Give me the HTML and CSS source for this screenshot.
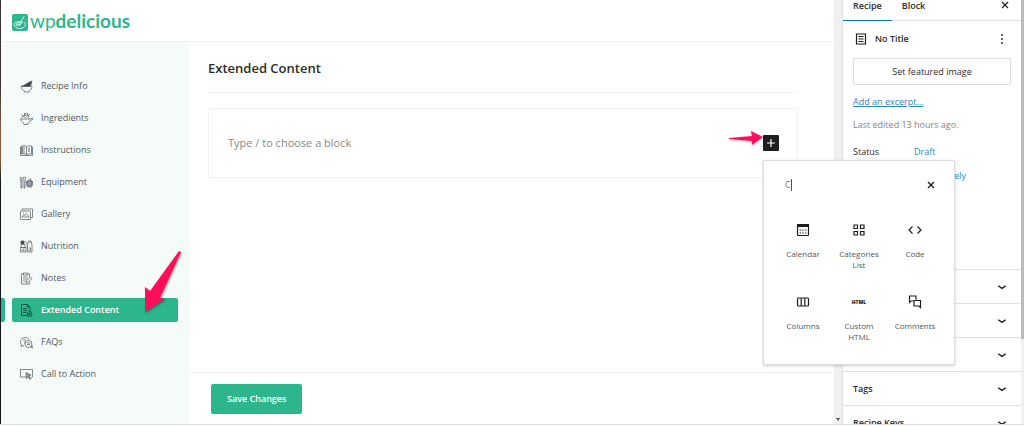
FILE: index.html
```html
<!DOCTYPE html>
<html lang="en">
<head>
<meta charset="UTF-8">
<meta name="viewport" content="width=device-width, initial-scale=1.0">
<title>WP Delicious - Extended Content</title>
<link rel="stylesheet" href="styles.css">
</head>
<body>
<div class="page">
    <div class="edge"></div>
    <div class="app">
        <header class="app-header">
            <a class="logo" href="#">
                <svg width="16" height="17" viewBox="0 0 32 34">
                    <rect width="32" height="34" rx="4" fill="#2db68d"/>
                    <g fill="none" stroke="#fff" stroke-width="1.6" stroke-linecap="round">
                        <path d="M12 16c-6 0-8 3-8 5 1 5 5 8 11 8 7 0 12-4 12-9 0-2-1-3-3-3"/>
                        <path d="M24 5L18 15M18 15c-5 0-9 3-10 7 6 2 12-1 12-6zM18 15c-3 2-5 4-6 7M19 16c0 3-2 5-4 6"/>
                    </g>
                </svg>
                <span class="logo-text">wp<b>delicious</b></span>
            </a>
        </header>
        <div class="app-body">
            <nav class="side-nav">
                <a href="#" class="nav-item">
                    <svg viewBox="0 0 26 26"><path d="M2 12h22c0 6-3 9-6 10v2H9v-2c-4-1-6-5-7-10z"/><path class="fill" d="M4 13L19 4l5-2-1 4-3 7z"/></svg>
                    <span>Recipe Info</span>
                </a>
                <a href="#" class="nav-item">
                    <svg viewBox="0 0 26 26"><path d="M1 14h20l4-2v3l-5 2c-1 4-3 6-5 6v2H8v-2c-4-2-6-5-7-9z"/><path d="M4 13c-2-4 2-6 4-4 0-3 4-3 5 0 2-3 6-1 5 4M9 8V2l3 3 3-3v6M3 5l4 3M20 4l-4 4M10 12v-2M14 12v-1"/></svg>
                    <span>Ingredients</span>
                </a>
                <a href="#" class="nav-item">
                    <svg viewBox="0 0 26 26"><path d="M13 6c-3-3-7-3-10-2v16c4-1 7-1 10 2 3-3 6-3 10-2V4c-3-1-7-1-10 2zM13 6v16M3 6H1v17h24V6h-2M16 9l4-1M16 12l4-1M16 15l4-1M5 5v14M8 5v14"/></svg>
                    <span>Instructions</span>
                </a>
                <a href="#" class="nav-item">
                    <svg viewBox="0 0 26 26"><path d="M1 2v6c0 2 3 2 3 0V2M2 9v15h2V9M7 3c3-2 5 0 4 4l-1 3v14H8V10zM14 10h10v9c0 3-10 3-10 0zM12 13h2M24 13h2M17 6h4v4M16 22v2M22 22v2"/><path class="soft" d="M14 10h10v10H14z"/></svg>
                    <span>Equipment</span>
                </a>
                <a href="#" class="nav-item">
                    <svg viewBox="0 0 26 26"><rect x="1" y="6" width="20" height="17" rx="1"/><path d="M4 5V2h21v17h-3M4 18c2-4 4-6 6-3 2-6 4-4 8 3zM6 10h2"/></svg>
                    <span>Gallery</span>
                </a>
                <a href="#" class="nav-item">
                    <svg viewBox="0 0 26 26"><path d="M2 9h8v6H2zM1 15h11v9H1zM10 2l5 8v14h9V10l-2-8h-5l-2 8M12 15l3-3M17 16h4v5h-4M5 18h4M3 21h6M18 5h3"/><path class="fill" d="M2 2h6v6H2z"/></svg>
                    <span>Nutrition</span>
                </a>
                <a href="#" class="nav-item">
                    <svg viewBox="0 0 26 26"><path d="M7 4H3v20h16v-4M15 4h4v6M7 2h8v4H7zM6 10h10M6 14h8M6 18h5M12 21l1-4 8-7 3 3-8 7z"/></svg>
                    <span>Notes</span>
                </a>
                <a href="#" class="nav-item active">
                    <svg viewBox="0 0 26 26"><path d="M14 23H3V1h12l5 5v8M15 1v5h5M6 9h8M6 13h8M6 17h6"/><circle cx="19" cy="20" r="5"/><path d="M19 17v6M16 20h6"/></svg>
                    <span>Extended Content</span>
                </a>
                <a href="#" class="nav-item">
                    <svg viewBox="0 0 26 26"><path d="M3 18c-4-5-2-14 6-15 5-1 8 2 9 5M3 18l-1 3 6-2"/><path d="M7 9c0-3 4-3 4 0l-2 3v1M9 15v1"/><circle cx="17" cy="16" r="7"/><path d="M21 22l4 2-1-5M14 14h7M14 17h6"/></svg>
                    <span>FAQs</span>
                </a>
                <a href="#" class="nav-item">
                    <svg viewBox="0 0 26 26"><path d="M12 18H1V3h24v15h-2"/><path class="soft" d="M12 9l10 5-4 2 4 5-2 2-4-5-3 3z"/></svg>
                    <span>Call to Action</span>
                </a>
            </nav>
            <main class="main">
                <div class="content">
                    <h2>Extended Content</h2>
                    <div class="block-box">
                        <span class="placeholder">Type / to choose a block</span>
                        <div class="inserter">
                            <button class="add-btn" aria-label="Add block">
                                <svg width="16" height="16" viewBox="0 0 16 16"><path d="M8 4v8M4 8h8" stroke="#fff" stroke-width="1.2"/></svg>
                            </button>
                            <svg class="arrow-small" viewBox="0 0 34 14"><path fill="#ff0f5b" d="M0 8v-1l23-2-1-5 12 6-11 8v-4z"/></svg>
                            <div class="popover">
                                <div class="search">
                                    <div class="search-field">
                                        <input type="text" value="C" aria-label="Search">
                                    </div>
                                    <button aria-label="Reset search">
                                        <svg width="8" height="8" viewBox="0 0 8 8"><path d="M1 1l6 6M7 1L1 7" stroke="#1e1e1e" stroke-width="1.4"/></svg>
                                    </button>
                                </div>
                                <div class="block-grid">
                                    <button class="block-type">
                                        <svg viewBox="0 0 16 16"><rect x="2.500" y="2.500" width="11" height="11" rx="1"/><path class="solid" d="M2 2h12v3H2z"/><path d="M4.600 8h7M4.600 11h7" stroke-dasharray="1.400 1.300"/></svg>
                                        <span>Calendar</span>
                                    </button>
                                    <button class="block-type">
                                        <svg viewBox="0 0 16 16"><path d="M3 3h3.500v3.500H3zM9.500 3H13v3.500H9.500zM3 9.500h3.500V13H3zM9.500 9.500H13V13H9.500z"/></svg>
                                        <span>Categories List</span>
                                    </button>
                                    <button class="block-type">
                                        <svg viewBox="0 0 16 16"><path d="M5.500 4.500L2 8l3.500 3.500M10.500 4.500L14 8l-3.500 3.500"/></svg>
                                        <span>Code</span>
                                    </button>
                                    <button class="block-type">
                                        <svg viewBox="0 0 16 16"><rect x="2.500" y="4" width="11" height="8" rx="1"/><path d="M6.200 4v8M9.800 4v8"/></svg>
                                        <span>Columns</span>
                                    </button>
                                    <button class="block-type">
                                        <i class="html-icon">HTML</i>
                                        <span>Custom HTML</span>
                                    </button>
                                    <button class="block-type">
                                        <svg viewBox="0 0 16 16"><path d="M6 7H4L2.500 8.500V2H9v3.500M7 6.500h6.500v7L12 12H7z"/></svg>
                                        <span>Comments</span>
                                    </button>
                                </div>
                            </div>
                        </div>
                    </div>
                </div>
                <footer class="save-bar">
                    <button class="save-btn">Save Changes</button>
                </footer>
            </main>
        </div>
        <svg class="arrow-big" viewBox="0 0 40 64"><path fill="#ff0f5b" d="M36 1l2 1-21 46 5 1L2 62V37l5 4z"/></svg>
    </div>
    <div class="scrollbar"><span></span></div>
    <aside class="settings">
        <div class="tabs">
            <button class="tab current">Recipe</button>
            <button class="tab">Block</button>
            <button class="close" aria-label="Close settings">
                <svg width="8" height="8" viewBox="0 0 8 8"><path d="M1 1l6 6M7 1L1 7" stroke="#1e1e1e" stroke-width="1.2"/></svg>
            </button>
        </div>
        <div class="summary">
            <div class="post-card">
                <svg width="12" height="12" viewBox="0 0 12 12"><path d="M1.500 1h9v10h-9zM3.500 3.500h5M3.500 6h5M3.500 8.500h5" fill="none" stroke="#1e1e1e" stroke-width="1.200"/></svg>
                <span>No Title</span>
                <button aria-label="Actions">
                    <svg width="4" height="12" viewBox="0 0 4 12" fill="#1e1e1e"><circle cx="2" cy="2" r="0.900"/><circle cx="2" cy="6" r="0.900"/><circle cx="2" cy="10" r="0.900"/></svg>
                </button>
            </div>
            <button class="featured">Set featured image</button>
            <a class="excerpt" href="#">Add an excerpt…</a>
            <p class="edited">Last edited 13 hours ago.</p>
            <div class="row"><span>Status</span><a href="#">Draft</a></div>
            <div class="row"><span>Publish</span><a href="#">Immediately</a></div>
        </div>
        <button class="panel" aria-label="Toggle panel"><svg viewBox="0 0 8 8"><path d="M1 3l3 2 3-2"/></svg></button>
        <button class="panel" aria-label="Toggle panel"><svg viewBox="0 0 8 8"><path d="M1 3l3 2 3-2"/></svg></button>
        <button class="panel" aria-label="Toggle panel"><svg viewBox="0 0 8 8"><path d="M1 3l3 2 3-2"/></svg></button>
        <button class="panel"><span>Tags</span><svg viewBox="0 0 8 8"><path d="M1 3l3 2 3-2"/></svg></button>
        <button class="panel"><span>Recipe Keys</span><svg viewBox="0 0 8 8"><path d="M1 3l3 2 3-2"/></svg></button>
    </aside>
    <div class="page-scroll"></div>
</div>
</body>
</html>
```
FILE: styles.css
```css
* {
    box-sizing: border-box;
}
body {
    margin: 0;
    background-color: #fff;
    font-family: "Open Sans", "Noto Sans", sans-serif;
    font-size: 9px;
    line-height: 12px;
    color: #2c2c2c;
    overflow: hidden;
}
button, input {
    font: inherit;
    color: inherit;
    background: none;
    border: none;
    padding: 0;
    margin: 0;
}
button {
    cursor: pointer;
}
a {
    text-decoration: none;
}
.page {
    display: flex;
    height: calc(100vh - 2px);
    border-bottom: 1px solid #ddd;
    overflow: hidden;
}
/* sliver of the dark admin menu */
.edge {
    width: 1px;
    background: linear-gradient(#3a3433 0%, #3a3433 20%, #8a5a3c 30%, #8a5a3c 38%, #14161c 43%);
}
.app {
    flex: 1;
    position: relative;
    display: flex;
    flex-direction: column;
}
.app-header {
    height: 42px;
    border-bottom: 1px solid #f0f0f0;
    padding: 0 11px;
    display: flex;
    align-items: center;
}
.logo {
    display: flex;
    align-items: center;
    gap: 2px;
    padding-top: 4px;
    color: #2db68d;
}
.logo-text {
    padding-bottom: 4px;
    font-family: Lato, sans-serif;
    font-size: 19px;
    line-height: 20px;
}
.app-body {
    flex: 1;
    display: flex;
}
.side-nav {
    width: 188px;
    background-color: #f5fbf9;
    padding: 32px 11px;
    display: flex;
    flex-direction: column;
    gap: 8px;
}
.nav-item {
    position: relative;
    height: 24px;
    padding: 0 8px;
    display: flex;
    align-items: center;
    gap: 8px;
    border-radius: 2px;
    color: #50575e;
}
.nav-item svg {
    width: 13px;
    height: 13px;
    fill: none;
    stroke: #50575e;
    stroke-width: 1.4;
}
.nav-item .fill {
    fill: #3c4348;
}
.nav-item .soft {
    fill: #9aa3a5;
}
.nav-item.active {
    background-color: #2db68d;
    color: #fff;
    font-weight: 600;
}
.nav-item.active svg {
    stroke: #17493b;
    stroke-width: 1.8;
}
/* end of the highlighted admin menu entry */
.nav-item.active::before {
    content: "";
    position: absolute;
    left: -11px;
    width: 4px;
    height: 24px;
    background-color: #2db68d;
    border-radius: 0 2px 2px 0;
}
.main {
    flex: 1;
    display: flex;
    flex-direction: column;
}
.content {
    flex: 1;
    padding: 16px 36px 16px 19px;
}
.content h2 {
    margin: 0 0 15px;
    padding-bottom: 14px;
    border-bottom: 1px solid #f0f0f0;
    font-size: 13px;
    line-height: 20px;
    font-weight: 600;
}
.block-box {
    height: 70px;
    padding: 0 18px 0 19px;
    border: 1px solid #f3f3f3;
    display: flex;
    align-items: center;
    justify-content: space-between;
}
.placeholder {
    font-size: 11px;
    line-height: 16px;
    color: #888;
}
.inserter {
    position: relative;
}
.add-btn {
    display: block;
    width: 16px;
    height: 16px;
    background-color: #1e1e1e;
    border-radius: 1px;
}
.add-btn svg {
    display: block;
}
.arrow-small {
    position: absolute;
    right: 16px;
    top: -4px;
    width: 34px;
    height: 14px;
    filter: drop-shadow(0 1px 1px rgba(0, 0, 0, 0.3));
}
.popover {
    position: absolute;
    top: 25px;
    left: 0;
    z-index: 2;
    width: 192px;
    height: 205px;
    padding: 16px 11px 8px;
    background-color: #fff;
    border: 1px solid #ddd;
    border-radius: 1px;
    box-shadow: 0 1px 3px rgba(0, 0, 0, 0.2);
}
.search {
    display: flex;
    align-items: center;
    justify-content: space-between;
    height: 16px;
    padding: 0 8px 0 10px;
    margin-bottom: 27px;
}
.search-field {
    position: relative;
}
.search-field input {
    width: 100px;
    display: block;
    color: #757575;
}
/* text caret */
.search-field::after {
    content: "";
    position: absolute;
    left: 6px;
    top: 0;
    width: 1px;
    height: 12px;
    background-color: #555;
}
.search button svg {
    display: block;
}
.block-grid {
    display: grid;
    grid-template-columns: repeat(3, 1fr);
    grid-auto-rows: 72px;
}
.block-type {
    display: flex;
    flex-direction: column;
    align-items: center;
    gap: 10px;
    padding: 2px 4px;
    font-size: 8px;
    line-height: 11px;
    color: #50575e;
}
.block-type svg {
    width: 16px;
    height: 16px;
    fill: none;
    stroke: #1e1e1e;
    stroke-width: 1.2;
}
.block-type .solid {
    fill: #1e1e1e;
    stroke: none;
}
.html-icon {
    height: 16px;
    font-size: 5px;
    line-height: 16px;
    font-style: normal;
    font-weight: 800;
    color: #1e1e1e;
}
.save-bar {
    height: 52px;
    padding: 0 22px;
    border-top: 1px solid #f0f0f0;
    display: flex;
    align-items: center;
}
.save-btn {
    height: 30px;
    padding: 0 16px;
    background-color: #2db68d;
    border-radius: 2px;
    color: #fff;
    font-weight: 600;
}
.arrow-big {
    position: absolute;
    left: 142px;
    top: 250px;
    width: 40px;
    height: 64px;
    filter: drop-shadow(1px 1px 1px rgba(0, 0, 0, 0.4));
}
.scrollbar {
    width: 9px;
    background-color: #f0f0f0;
    border-right: 1px solid #e0e0e0;
    display: flex;
    align-items: flex-end;
    justify-content: center;
    padding-bottom: 3px;
}
.scrollbar span {
    border: 2px solid transparent;
    border-top: 3px solid #555;
    border-bottom: none;
}
.settings {
    width: 178px;
    overflow: hidden;
}
.tabs {
    height: 21px;
    display: flex;
    border-bottom: 1px solid #e0e0e0;
}
.tab {
    height: 21px;
    padding: 0 10px 9px;
    font-weight: 600;
}
.tab.current {
    border-bottom: 1px solid #007cba;
}
.close {
    margin-left: auto;
    padding: 0 12px 10px;
}
.close svg {
    display: block;
}
.summary {
    height: 248px;
    padding: 10px 10px 0;
}
.post-card {
    display: flex;
    align-items: center;
    gap: 8px;
    height: 16px;
    padding: 0 7px 0 2px;
    margin-bottom: 11px;
    font-weight: 600;
}
.post-card button {
    margin-left: auto;
    height: 12px;
}
.post-card button svg {
    display: block;
}
.featured {
    display: block;
    width: 100%;
    height: 27px;
    margin-bottom: 11px;
    border: 1px solid #ddd;
    border-radius: 1px;
}
.excerpt {
    display: block;
    text-decoration: underline;
}
.summary a {
    color: #2c88c0;
}
.edited {
    margin: 11px 0 15px;
    color: #858585;
}
.row {
    display: grid;
    grid-template-columns: 61px 1fr;
    margin-bottom: 12px;
}
.panel {
    width: 100%;
    height: 34px;
    padding: 0 14px 0 10px;
    border-top: 1px solid #e0e0e0;
    display: flex;
    align-items: center;
    justify-content: space-between;
    font-weight: 600;
}
.panel svg {
    width: 10px;
    height: 10px;
    margin-left: auto;
    fill: none;
    stroke: #1e1e1e;
    stroke-width: 1.2;
}
.page-scroll {
    width: 3px;
    background: linear-gradient(#bbb 80%, #f0f0f0 80%);
}
```
